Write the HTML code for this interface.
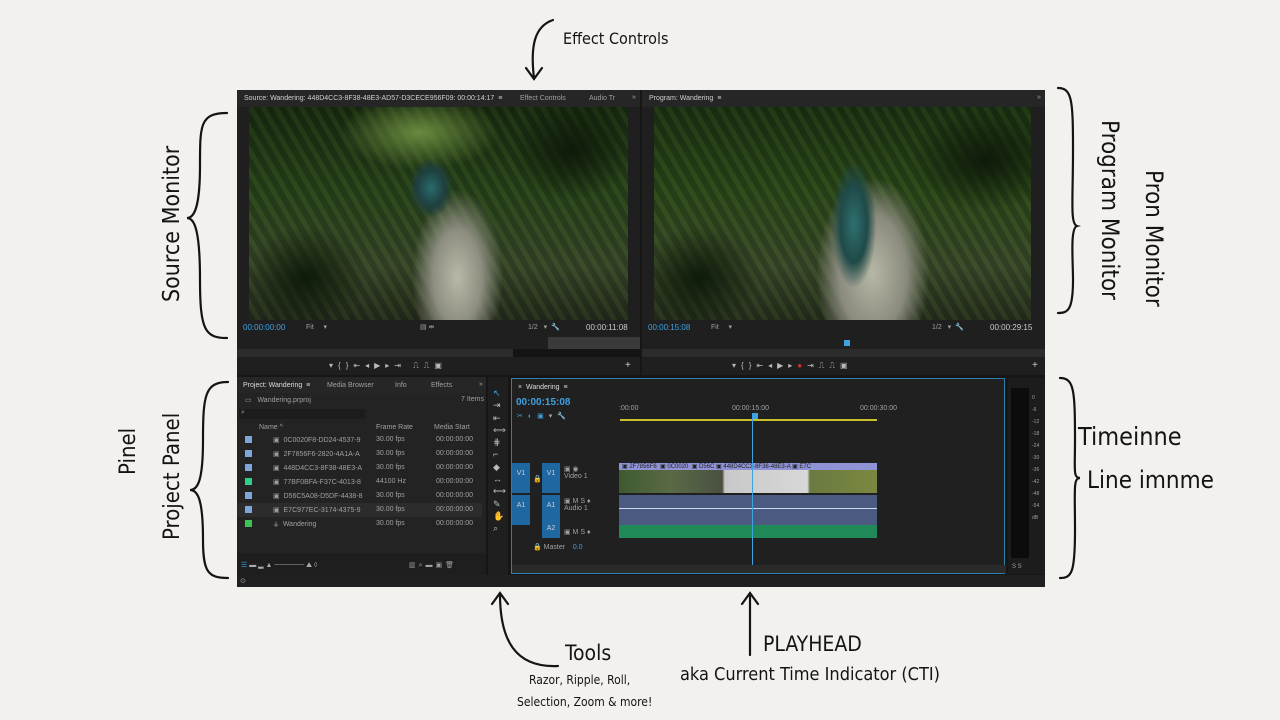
<!DOCTYPE html>
<html><head><meta charset="utf-8"><style>
*{margin:0;padding:0;box-sizing:border-box}
body{width:1280px;height:720px;background:#f2f1ed;position:relative;overflow:hidden;font-family:"Liberation Sans",sans-serif}
.hand{position:absolute;color:#141414;font-family:"DejaVu Sans Condensed","DejaVu Sans",sans-serif;white-space:nowrap}
.vr{writing-mode:vertical-rl}
.vl{writing-mode:vertical-rl;transform:rotate(180deg)}
#app{position:absolute;left:237px;top:90px;width:808px;height:497px;background:#161616}
.p{position:absolute;background:#232323}
.t{position:absolute;font-size:7px;color:#a0a0a0;white-space:nowrap}
.blue{color:#3ea2e0}
.vid{position:absolute;background:
 radial-gradient(ellipse 6% 14% at 48% 38%,#2a6a6a 0%,#1f4040 60%,transparent 100%),
 radial-gradient(ellipse 16% 55% at 55% 80%,#b9b9a8 0%,#8d8e80 40%,transparent 75%),
 radial-gradient(ellipse 20% 30% at 15% 80%,#0e1a0a 0%,transparent 80%),
 radial-gradient(ellipse 20% 30% at 85% 20%,#0e1a0a 0%,transparent 80%),
 radial-gradient(ellipse 30% 25% at 45% 12%,#6a8a3e 0%,transparent 70%),
 repeating-linear-gradient(60deg,rgba(0,0,0,.12) 0 6px,rgba(120,160,60,.08) 6px 11px),
 linear-gradient(180deg,#172a10 0%,#27421a 40%,#364528 75%,#23291b 100%)}
.row{position:absolute;left:0;width:245px;height:14px}
.sw{position:absolute;left:8px;top:3px;width:7px;height:7px;background:#7fa6d8}
.tl{position:absolute;background:#1e67a0;color:#ccd;font-size:7px;text-align:center}
</style></head><body>

<svg width="1280" height="720" style="position:absolute;left:0;top:0" fill="none" stroke="#141414" stroke-width="2.2" stroke-linecap="round">
 <path d="M553 20 C535 26 530 45 534 78 M526 68 L534 79 L542 68"/>
 <path d="M227 113 C200 113 200 125 200 165 C200 205 195 218 187 218 C195 218 200 232 200 280 C200 330 205 338 227 338"/>
 <path d="M228 382 C205 382 203 395 203 440 C203 480 198 490 190 490 C198 490 203 500 203 540 C203 572 208 578 228 578"/>
 <path d="M1058 88 C1072 88 1073 100 1073 150 C1073 200 1070 224 1077 226 C1070 228 1073 260 1073 280 C1073 310 1068 313 1058 313"/>
 <path d="M1060 378 C1074 378 1075 390 1075 440 C1075 470 1073 478 1080 478 C1073 478 1075 490 1075 530 C1075 572 1072 578 1060 578"/>
 <path d="M500 594 C500 640 515 668 558 666 M492 604 L500 593 L508 604"/>
 <path d="M750 594 L750 655 M742 604 L750 593 L758 604"/>
</svg>
<div class="hand" style="left:563px;top:29px;font-size:16px">Effect Controls</div>
<div class="hand vl" style="left:159px;top:130px;font-size:23px;height:172px">Source Monitor</div>
<div class="hand vl" style="left:160px;top:400px;font-size:22px;height:140px">Project Panel</div>
<div class="hand vl" style="left:116px;top:440px;font-size:22px;height:35px">Pinel</div>
<div class="hand vr" style="left:1096px;top:120px;font-size:24px;height:195px">Program Monitor</div>
<div class="hand vr" style="left:1140px;top:170px;font-size:24px;height:145px">Pron Monitor</div>
<div class="hand" style="left:1078px;top:422px;font-size:25px">Timeinne</div>
<div class="hand" style="left:1087px;top:466px;font-size:24px">Line imnme</div>
<div class="hand" style="left:565px;top:641px;font-size:21px">Tools</div>
<div class="hand" style="left:529px;top:673px;font-size:12px">Razor, Ripple, Roll,</div>
<div class="hand" style="left:517px;top:695px;font-size:12px">Selection, Zoom &amp; more!</div>
<div class="hand" style="left:763px;top:632px;font-size:21px">PLAYHEAD</div>
<div class="hand" style="left:680px;top:664px;font-size:18px">aka Current Time Indicator (CTI)</div>

<div id="app">
 <div class="p" style="left:0;top:0;width:403px;height:285px;background:#1f1f1f">
  <div style="position:absolute;left:0;top:0;width:403px;height:17px;background:#262626"></div>
  <div class="t" style="left:7px;top:5px;color:#d0d0d0">Source: Wandering: 448D4CC3-8F38-48E3-AD57-D3CECE956F09: 00:00:14:17 &nbsp;≡</div>
  <div class="t" style="left:283px;top:5px">Effect Controls</div>
  <div class="t" style="left:352px;top:5px">Audio Tr</div>
  <div class="t" style="left:395px;top:4px">»</div>
  <div class="vid" style="left:12px;top:17px;width:379px;height:213px"></div>
  <div class="t blue" style="left:6px;top:233px;font-size:8px">00:00:00:00</div>
  <div class="t" style="left:69px;top:233px">Fit &nbsp;&nbsp;&nbsp;&nbsp;▾</div>
  <div class="t" style="left:183px;top:233px">▤ ⇹</div>
  <div class="t" style="left:291px;top:233px">1/2 &nbsp;&nbsp;▾ &nbsp;🔧</div>
  <div class="t" style="left:349px;top:233px;color:#ccc;font-size:8px">00:00:11:08</div>
  <div style="position:absolute;left:311px;top:247px;width:92px;height:12px;background:#3a3a3a"></div>
  <div style="position:absolute;left:0;top:259px;width:403px;height:8px;background:#2c2c2c"></div>
  <div style="position:absolute;left:276px;top:259px;width:127px;height:8px;background:#141414"></div>
  <div class="t" style="left:92px;top:271px;font-size:8px;letter-spacing:5px;color:#bbb">▾{}⇤◂▶▸⇥ ⎍⎍▣</div>
 </div>
 <div class="p" style="left:405px;top:0;width:403px;height:285px;background:#1f1f1f">
  <div style="position:absolute;left:0;top:0;width:403px;height:17px;background:#262626"></div>
  <div class="t" style="left:7px;top:5px;color:#d0d0d0">Program: Wandering &nbsp;≡</div>
  <div class="t" style="left:395px;top:4px">»</div>
  <div class="vid" style="left:12px;top:17px;width:377px;height:213px;background:
   radial-gradient(ellipse 6% 30% at 53% 55%,#2f7070 0%,#1f4a48 60%,transparent 100%),
   radial-gradient(ellipse 20% 60% at 58% 78%,#b7b7a6 0%,#8a8b7d 45%,transparent 75%),
   radial-gradient(ellipse 20% 30% at 12% 80%,#0e1a0a 0%,transparent 80%),
   radial-gradient(ellipse 25% 30% at 88% 25%,#0e1a0a 0%,transparent 80%),
   repeating-linear-gradient(60deg,rgba(0,0,0,.12) 0 6px,rgba(120,160,60,.08) 6px 11px),
   linear-gradient(180deg,#1a3012 0%,#2a4619 40%,#384729 75%,#252d1c 100%)"></div>
  <div class="t blue" style="left:6px;top:233px;font-size:8px">00:00:15:08</div>
  <div class="t" style="left:69px;top:233px">Fit &nbsp;&nbsp;&nbsp;&nbsp;▾</div>
  <div class="t" style="left:290px;top:233px">1/2 &nbsp;&nbsp;▾ &nbsp;🔧</div>
  <div class="t" style="left:348px;top:233px;color:#ccc;font-size:8px">00:00:29:15</div>
  <div style="position:absolute;left:202px;top:250px;width:6px;height:6px;background:#3ea2e0"></div>
  <div style="position:absolute;left:0;top:259px;width:403px;height:8px;background:#2c2c2c"></div>
  <div class="t" style="left:90px;top:271px;font-size:8px;letter-spacing:5px;color:#bbb">▾{}⇤◂▶▸<span style="color:#c33">●</span>⇥⎍⎍▣</div>
  <div class="t" style="left:390px;top:270px;font-size:10px;color:#ccc">+</div>
 </div>
 <div class="t" style="left:388px;top:270px;font-size:10px;color:#ccc">+</div>
 <div class="p" style="left:0;top:287px;width:249px;height:198px">
  <div style="position:absolute;left:0;top:0;width:249px;height:16px;background:#262626"></div>
  <div class="t" style="left:6px;top:5px;color:#ddd">Project: Wandering &nbsp;≡</div>
  <div class="t" style="left:90px;top:5px">Media Browser</div>
  <div class="t" style="left:158px;top:5px">Info</div>
  <div class="t" style="left:194px;top:5px">Effects</div>
  <div class="t" style="left:242px;top:4px">»</div>
  <div class="t" style="left:8px;top:19px">▭ &nbsp;&nbsp;Wandering.prproj</div>
  <div class="t" style="left:224px;top:19px">7 Items</div>
  <div style="position:absolute;left:2px;top:32px;width:126px;height:10px;background:#1c1c1c"></div>
  <div class="t" style="left:4px;top:32px">⌕</div>
  <div class="t" style="left:22px;top:47px">Name ^</div>
  <div class="t" style="left:139px;top:47px">Frame Rate</div>
  <div class="t" style="left:197px;top:47px">Media Start</div>
  <div class="row" style="top:56px"><div class="sw"></div><div class="t" style="left:36px;top:3px">▣ &nbsp;0C0020F8-DD24-4537-9</div><div class="t" style="left:139px;top:3px">30.00 fps</div><div class="t" style="left:199px;top:3px">00:00:00:00</div></div>
  <div class="row" style="top:70px"><div class="sw"></div><div class="t" style="left:36px;top:3px">▣ &nbsp;2F7856F6-2820-4A1A-A</div><div class="t" style="left:139px;top:3px">30.00 fps</div><div class="t" style="left:199px;top:3px">00:00:00:00</div></div>
  <div class="row" style="top:84px"><div class="sw"></div><div class="t" style="left:36px;top:3px">▣ &nbsp;448D4CC3-8F38-48E3-A</div><div class="t" style="left:139px;top:3px">30.00 fps</div><div class="t" style="left:199px;top:3px">00:00:00:00</div></div>
  <div class="row" style="top:98px"><div class="sw" style="background:#2fd08a"></div><div class="t" style="left:36px;top:3px">▣ &nbsp;77BF0BFA-F37C-4013-8</div><div class="t" style="left:139px;top:3px">44100 Hz</div><div class="t" style="left:199px;top:3px">00:00:00:00</div></div>
  <div class="row" style="top:112px"><div class="sw"></div><div class="t" style="left:36px;top:3px">▣ &nbsp;D56C5A08-D5DF-4438-8</div><div class="t" style="left:139px;top:3px">30.00 fps</div><div class="t" style="left:199px;top:3px">00:00:00:00</div></div>
  <div class="row" style="top:126px;background:#2c2c2c"><div class="sw"></div><div class="t" style="left:36px;top:3px">▣ &nbsp;E7C977EC-3174-4375-9</div><div class="t" style="left:139px;top:3px">30.00 fps</div><div class="t" style="left:199px;top:3px">00:00:00:00</div></div>
  <div class="row" style="top:140px"><div class="sw" style="background:#3bc452"></div><div class="t" style="left:36px;top:3px">⚶ &nbsp;Wandering</div><div class="t" style="left:139px;top:3px">30.00 fps</div><div class="t" style="left:199px;top:3px">00:00:00:00</div></div>
  <div style="position:absolute;left:0;top:176px;width:249px;height:22px;background:#1e1e1e"></div>
  <div class="t" style="left:4px;top:184px;color:#3ea2e0">☰ <span style="color:#aaa">▬ ▂ ▲ ────── ⛰ ◊</span></div>
  <div class="t" style="left:172px;top:184px;letter-spacing:3px">▥⌕▬▣🗑</div>
 </div>
 <div class="p" style="left:251px;top:287px;width:20px;height:198px;background:#1f1f1f">
  <div class="t" style="left:5px;top:10px;font-size:9px;line-height:12.3px;color:#bbb;white-space:pre"><span class="blue">↖</span>
⇥
⇤
⟺
⋕
⌐
◆
↔
⟷
✎
✋
⌕</div>
 </div>
 <div class="p" style="left:274px;top:288px;width:494px;height:196px;border:1px solid #2f7fae;background:#202020">
  <div class="t" style="left:6px;top:5px;color:#ddd">× &nbsp;Wandering &nbsp;≡</div>
  <div class="t blue" style="left:4px;top:18px;font-size:10px;font-weight:bold">00:00:15:08</div>
  <div class="t" style="left:5px;top:33px;letter-spacing:5px;color:#3ea2e0">✂◐▣<span style="color:#aaa">▾🔧</span></div>
  <div class="t" style="left:107px;top:26px">:00:00</div>
  <div class="t" style="left:220px;top:26px">00:00:15:00</div>
  <div class="t" style="left:348px;top:26px">00:00:30:00</div>
  <div style="position:absolute;left:108px;top:40px;width:257px;height:2px;background:#c9c12a"></div>
  <div style="position:absolute;left:240px;top:34px;width:6px;height:6px;background:#3ea2e0"></div>
  <div style="position:absolute;left:0;top:84px;width:18px;height:30px" class="tl"><br>V1</div>
  <div style="position:absolute;left:30px;top:84px;width:18px;height:30px" class="tl"><br>V1</div>
  <div class="t" style="left:21px;top:96px">🔒</div>
  <div class="t" style="left:52px;top:86px">▣ ◉<br>Video 1</div>
  <div style="position:absolute;left:0;top:116px;width:18px;height:30px" class="tl"><br>A1</div>
  <div style="position:absolute;left:30px;top:116px;width:18px;height:30px" class="tl"><br>A1</div>
  <div class="t" style="left:52px;top:118px">▣ M S ♦<br>Audio 1</div>
  <div style="position:absolute;left:30px;top:146px;width:18px;height:13px" class="tl">A2</div>
  <div class="t" style="left:52px;top:149px">▣ M S ♦</div>
  <div class="t" style="left:21px;top:164px">🔒 Master &nbsp;&nbsp;&nbsp;<span class="blue">0.0</span></div>
  <div style="position:absolute;left:107px;top:84px;width:258px;height:30px;background:linear-gradient(90deg,#3e5a30,#5a6a45 20%,#4a5040 40%,#c8c8c8 41%,#d8d8d8 73%,#6a7a40 74%,#7a8840)"></div>
  <div style="position:absolute;left:107px;top:84px;width:258px;height:7px;background:#8f93d6"></div>
  <div class="t" style="left:110px;top:84px;font-size:6px;color:#222">▣ 2F7856F6 &nbsp;▣ 0C0020 &nbsp;▣ D56C ▣ 448D4CC3-8F38-48E3-A ▣ E7C</div>
  <div style="position:absolute;left:107px;top:116px;width:258px;height:30px;background:#4a5a80"></div>
  <div style="position:absolute;left:107px;top:129px;width:258px;height:1px;background:#cfd8f0"></div>
  <div style="position:absolute;left:107px;top:146px;width:258px;height:13px;background:#1f8a58"></div>
  <div style="position:absolute;left:240px;top:40px;width:1px;height:148px;background:#3ea2e0"></div>
  <div style="position:absolute;left:0;top:186px;width:494px;height:8px;background:#2a2a2a"></div>
 </div>
 <div class="p" style="left:771px;top:288px;width:37px;height:196px;background:#1c1c1c">
  <div style="position:absolute;left:3px;top:10px;width:18px;height:170px;background:#0c0c0c"></div>
  <div class="t" style="left:24px;top:14px;font-size:5px;line-height:12px;white-space:pre">0
-6
-12
-18
-24
-30
-36
-42
-48
-54
dB</div>
  <div class="t" style="left:4px;top:186px;font-size:6px">S S</div>
 </div>
 <div style="position:absolute;left:0;top:485px;width:808px;height:12px;background:#202020"></div>
 <div class="t" style="left:3px;top:487px">⊙</div>
</div>
</body></html>
